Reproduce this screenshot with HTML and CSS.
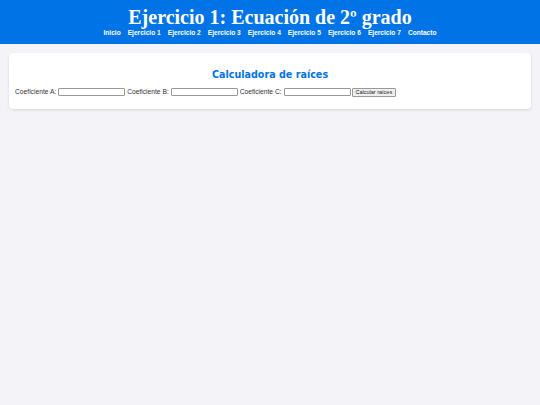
FILE: index.html
```html
<!DOCTYPE html>
<html lang="es">
<head>
<meta charset="utf-8">
<title>Ejercicio 1</title>
<link rel="stylesheet" href="styles.css">
</head>
<body class="page">
<header class="site-header">
  <h1 class="site-title">Ejercicio 1: Ecuación de 2º grado</h1>
  <nav class="site-nav">
    <a href="#">Inicio</a>
    <a href="#">Ejercicio 1</a>
    <a href="#">Ejercicio 2</a>
    <a href="#">Ejercicio 3</a>
    <a href="#">Ejercicio 4</a>
    <a href="#">Ejercicio 5</a>
    <a href="#">Ejercicio 6</a>
    <a href="#">Ejercicio 7</a>
    <a href="#">Contacto</a>
  </nav>
</header>
<main class="card">
  <h2 class="card-title">Calculadora de raíces</h2>
  <form class="calc-form"><label class="field">Coeficiente A: <input class="field-input" type="text"></label><label class="field">Coeficiente B: <input class="field-input" type="text"></label><label class="field">Coeficiente C: <input class="field-input" type="text"></label><button class="calc-button" type="button">Calcular raíces</button></form>
</main>
</body>
</html>
```
FILE: styles.css
```css
html, body {
  margin: 0;
  padding: 0;
}
.page {
  background: #f4f4f8;
  font-family: "Liberation Sans", Arial, sans-serif;
  color: #333;
}
.site-header {
  background: #0073e6;
  color: #fff;
  text-align: center;
  padding: 7px 0 7px;
}
.site-title {
  margin: 0;
  font-family: "Liberation Serif", "Times New Roman", serif;
  font-weight: bold;
  font-size: 20px;
  line-height: 20px;
}
.site-nav {
  margin-top: 1px;
  font-size: 6.6px;
  line-height: 9px;
  font-weight: bold;
}
.site-nav a {
  color: #fff;
  text-decoration: none;
  margin: 0 2.6px;
}
.card {
  display: block;
  background: #fff;
  margin: 9px;
  padding: 6px 6px 12px;
  border-radius: 4px;
  box-shadow: 0 1px 3px rgba(0, 0, 0, 0.12);
}
.card-title {
  margin: 10px 0 6px;
  text-align: center;
  color: #0073e6;
  font-family: "DejaVu Sans", Verdana, sans-serif;
  font-weight: bold;
  font-size: 9.6px;
  line-height: 12px;
}
.calc-form {
  margin: 0;
  font-size: 6.7px;
  line-height: 9px;
  color: #333;
}
.field {
  margin-right: 2px;
}
.field-input {
  width: 63px;
  height: 6px;
  padding: 0 1px;
  margin: 0;
  border: 1px solid #999;
  border-radius: 1px;
  font-size: 6.7px;
  vertical-align: middle;
}
.calc-button {
  font-family: "Liberation Sans", Arial, sans-serif;
  font-size: 5.5px;
  height: 9px;
  padding: 0 3px;
  margin-left: -1px;
  border: 1px solid #999;
  border-radius: 1px;
  background: #efefef;
  color: #222;
  vertical-align: middle;
}
```
